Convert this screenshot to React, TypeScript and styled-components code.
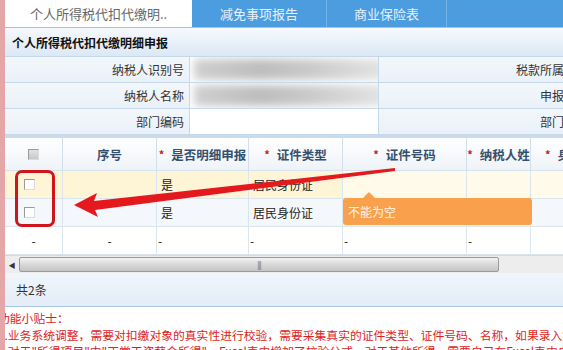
import { Fragment } from 'react'
import styled, { createGlobalStyle } from 'styled-components'

const GlobalStyle = createGlobalStyle`
  html, body {
    margin: 0;
    padding: 0;
    width: 563px;
    height: 350px;
    overflow: hidden;
    background: #ffffff;
  }
  body {
    font-family: "Noto Sans CJK SC", "Noto Sans", sans-serif;
    font-size: 12px;
    color: #222;
  }
`

const Page = styled.div`
  position: relative;
  width: 563px;
  height: 350px;
  overflow: hidden;
  box-sizing: border-box;
  border-left: 5px solid #e4a6a6;
  display: flex;
  flex-direction: column;
`

const TabBar = styled.div`
  display: flex;
  height: 27px;
  flex-shrink: 0;
  background: #4b9de0;
  border-bottom: 1px solid #9cc6ec;
`

const Tab = styled.div<{ $active?: boolean; $width: number }>`
  width: ${(p) => p.$width}px;
  flex-shrink: 0;
  display: flex;
  align-items: center;
  justify-content: center;
  font-size: 13px;
  box-sizing: border-box;
  white-space: nowrap;
  background: ${(p) => (p.$active ? '#ffffff' : 'transparent')};
  color: ${(p) => (p.$active ? '#666' : '#e6f1fb')};
  border-right: ${(p) => (p.$active ? 'none' : '1px solid #74b3e8')};
`

const TitleBar = styled.div`
  height: 28px;
  flex-shrink: 0;
  display: flex;
  align-items: center;
  padding-left: 7px;
  font-weight: bold;
  font-size: 12px;
  color: #111;
  background: linear-gradient(#f6f9fd, #dbe8f5);
  border-bottom: 1px solid #c4d8ec;
`

const Form = styled.div`
  display: grid;
  grid-template-columns: 185px 189px 1fr;
  grid-auto-rows: 26px;
  flex-shrink: 0;
  border-bottom: 2px solid #c9dcec;
`

const Label = styled.div<{ $cut?: boolean }>`
  display: flex;
  align-items: center;
  justify-content: flex-end;
  padding-right: ${(p) => (p.$cut ? '0' : '5px')};
  margin-right: ${(p) => (p.$cut ? '-14px' : '0')};
  white-space: nowrap;
  overflow: hidden;
  background: linear-gradient(#f3f7fb, #e9f1f9);
  border-bottom: 1px solid #c6d9ea;
  border-right: 1px solid #c6d9ea;
  color: #333;
`

const Value = styled.div`
  position: relative;
  overflow: hidden;
  background: #ffffff;
  border-bottom: 1px solid #c6d9ea;
  border-right: 1px solid #c6d9ea;
`

const Blurred = styled.div`
  position: absolute;
  inset: 2px -6px 2px 4px;
  background: linear-gradient(90deg, #cfcfcf, #bdbdbd 35%, #c9c9c9 60%, #e4e4e4);
  filter: blur(4px);
`

const Grid = styled.div`
  display: grid;
  grid-template-columns: 58px 94px 92px 94px 124px 64px 60px;
  flex-shrink: 0;
`

const HeadCell = styled.div<{ $start?: boolean }>`
  height: 34px;
  box-sizing: border-box;
  display: flex;
  align-items: center;
  justify-content: ${(p) => (p.$start ? 'flex-start' : 'center')};
  padding-left: ${(p) => (p.$start ? '14px' : '0')};
  gap: 7px;
  white-space: nowrap;
  overflow: hidden;
  font-weight: bold;
  font-size: 12.5px;
  color: #34506e;
  background: linear-gradient(#ffffff, #eef3f8);
  border-right: 1px solid #d2dfeb;
  border-bottom: 1px solid #d6e2ee;
  border-top: 1px solid #c9dcec;
`

const Star = styled.span`
  color: #c8181c;
  font-size: 11px;
`

const Cell = styled.div<{ $bg: string; $center?: boolean; $tight?: boolean }>`
  height: 28px;
  box-sizing: border-box;
  display: flex;
  align-items: center;
  justify-content: ${(p) => (p.$center ? 'center' : 'flex-start')};
  padding-left: ${(p) => (p.$center ? '0' : p.$tight ? '1px' : '4px')};
  white-space: nowrap;
  overflow: hidden;
  background: ${(p) => p.$bg};
  border-right: 1px solid #dbe5ee;
  border-bottom: 1px solid #dbe5ee;
  color: #222;
`

const Check = styled.span<{ $head?: boolean }>`
  width: 11px;
  height: 11px;
  box-sizing: border-box;
  border: 1px solid #9a9a9a;
  border-right-color: #dcdcdc;
  border-bottom-color: #dcdcdc;
  background: ${(p) => (p.$head ? 'linear-gradient(#e2e2e2, #c8c8c8)' : '#ffffff')};
  margin-left: ${(p) => (p.$head ? '0' : '-8px')};
`

const ScrollBar = styled.div`
  height: 17px;
  flex-shrink: 0;
  display: flex;
  align-items: stretch;
  background: #ededed;
  border-top: 1px solid #d8d8d8;
`

const ScrollArrow = styled.div`
  width: 14px;
  display: flex;
  align-items: center;
  justify-content: center;
  font-size: 7px;
  color: #333;
`

const ScrollThumb = styled.div`
  width: 480px;
  margin: 1px 0;
  box-sizing: border-box;
  border: 1px solid #9a9a9a;
  border-radius: 2px;
  background: linear-gradient(#f2f2f2, #d6d6d6 55%, #c4c4c4);
  display: flex;
  align-items: center;
  justify-content: center;
  font-size: 8px;
  letter-spacing: -1px;
  color: #666;
`

const Footer = styled.div`
  height: 33px;
  flex-shrink: 0;
  display: flex;
  align-items: center;
  padding-left: 11px;
  background: linear-gradient(#f0f5fb, #e3edf8);
  border-bottom: 1px solid #a9c7e4;
  color: #333;
`

const Tips = styled.div`
  padding-top: 3px;
  margin-left: -7px;
  color: #dd1c1c;
  font-size: 11.8px;
  line-height: 16.5px;
  white-space: nowrap;
`

const Highlight = styled.div`
  position: absolute;
  left: 10px;
  top: 170px;
  width: 40px;
  height: 57px;
  box-sizing: border-box;
  border: 3px solid #cf1519;
  border-radius: 7px;
`

const ArrowSvg = styled.svg`
  position: absolute;
  left: -5px;
  top: 0;
  pointer-events: none;
`

const Tooltip = styled.div`
  position: absolute;
  left: 338px;
  top: 198px;
  width: 189px;
  height: 27px;
  box-sizing: border-box;
  padding-left: 5px;
  display: flex;
  align-items: center;
  border-radius: 3px;
  background: #f8a04b;
  color: #fff6e6;
  font-size: 12px;

  &::before {
    content: '';
    position: absolute;
    left: 20px;
    top: -6px;
    border-left: 6px solid transparent;
    border-right: 6px solid transparent;
    border-bottom: 6px solid #f8a04b;
  }
`

const headers = ['是否明细申报', '证件类型', '证件号码', '纳税人姓']

const rows = [
  { bg: '#fef4d6', bgLight: '#fffae9' },
  { bg: '#f4f8fc', bgLight: '#f4f8fc' },
]

export default function App() {
  return (
    <>
      <GlobalStyle />
      <Page>
        <TabBar>
          <Tab $active $width={187}>个人所得税代扣代缴明..</Tab>
          <Tab $width={135}>减免事项报告</Tab>
          <Tab $width={120}>商业保险表</Tab>
        </TabBar>
        <TitleBar>个人所得税代扣代缴明细申报</TitleBar>
        <Form>
          <Label>纳税人识别号</Label>
          <Value>
            <Blurred />
          </Value>
          <Label $cut>税款所属期</Label>
          <Label>纳税人名称</Label>
          <Value>
            <Blurred />
          </Value>
          <Label $cut>申报期</Label>
          <Label>部门编码</Label>
          <Value />
          <Label $cut>部门名</Label>
        </Form>
        <Grid>
          <HeadCell>
            <Check $head />
          </HeadCell>
          <HeadCell>序号</HeadCell>
          {headers.map((h) => (
            <HeadCell key={h}>
              <Star>*</Star>
              {h}
            </HeadCell>
          ))}
          <HeadCell $start>
            <Star>*</Star>身份
          </HeadCell>
          {rows.map((r, i) => (
            <Fragment key={i}>
              <Cell $bg={r.bg} $center>
                <Check />
              </Cell>
              <Cell $bg={r.bg} />
              <Cell $bg={r.bg}>是</Cell>
              <Cell $bg={r.bg}>居民身份证</Cell>
              <Cell $bg={r.bgLight} />
              <Cell $bg={r.bgLight} />
              <Cell $bg={r.bgLight} />
            </Fragment>
          ))}
          <Cell $bg="#ffffff" $center>-</Cell>
          <Cell $bg="#ffffff" $center>-</Cell>
          <Cell $bg="#ffffff" $tight>-</Cell>
          <Cell $bg="#ffffff" $tight>-</Cell>
          <Cell $bg="#ffffff" $tight>-</Cell>
          <Cell $bg="#ffffff" $tight>-</Cell>
          <Cell $bg="#ffffff" />
        </Grid>
        <ScrollBar>
          <ScrollArrow>◀</ScrollArrow>
          <ScrollThumb>|||</ScrollThumb>
        </ScrollBar>
        <Footer>共2条</Footer>
        <Tips>
          <div>功能小贴士：</div>
          <div>1.业务系统调整，需要对扣缴对象的真实性进行校验，需要采集真实的证件类型、证件号码、名称，如果录入错误</div>
          <div>2.对于"所得项目"中"正常工资薪金所得"，Excel表中增加了校验公式，对于其他所得，需要自己在Excel表中自行</div>
        </Tips>
        <Highlight />
        <Tooltip>不能为空</Tooltip>
        <ArrowSvg width="563" height="350" viewBox="0 0 563 350">
          <polygon
            points="74,205 97,193 94,201 395,168 395,171 95,210 98,217"
            fill="#e3191e"
          />
        </ArrowSvg>
      </Page>
    </>
  )
}
